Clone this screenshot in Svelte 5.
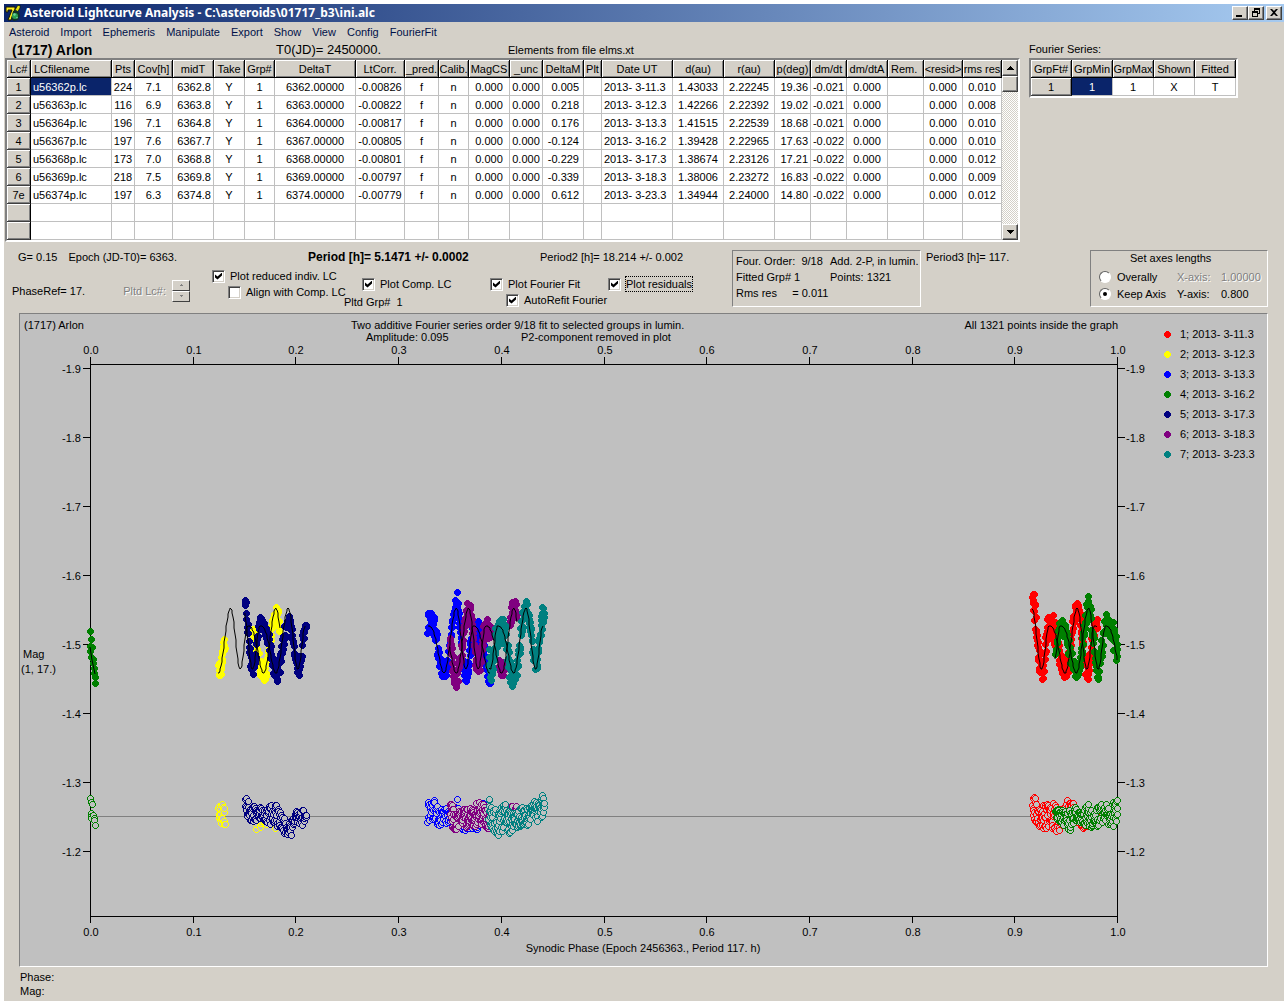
<script>
  const menu = ['Asteroid', 'Import', 'Ephemeris', 'Manipulate', 'Export', 'Show', 'View', 'Config', 'FourierFit'];

  // label, width, alignment of the cells
  const columns = [
    ['Lc#', 24, 'center'], ['LCfilename', 81, 'left'], ['Pts', 23, 'center'], ['Cov[h]', 38, 'center'],
    ['midT', 41, 'right'], ['Take', 31, 'center'], ['Grp#', 30, 'center'], ['DeltaT', 81, 'center'],
    ['LtCorr.', 49, 'center'], ['_pred.', 34, 'center'], ['Calib.', 30, 'center'], ['MagCS', 41, 'center'],
    ['_unc', 33, 'center'], ['DeltaM', 41, 'right wide'], ['Plt', 18, 'center'], ['Date UT', 71, 'left'],
    ['d(au)', 51, 'center'], ['r(au)', 51, 'center'], ['p(deg)', 36, 'right'], ['dm/dt', 36, 'center'],
    ['dm/dtA', 41, 'center'], ['Rem.', 36, 'left'], ['<resid>', 39, 'center'], ['rms res', 39, 'center']
  ];
  const night = (no, file, pts, cov, mid, delta, lt, dm, date, d, r, p, dmdt, rms) =>
    [no, file, pts, cov, mid, 'Y', '1', delta, lt, 'f', 'n', '0.000', '0.000', dm, '', date, d, r, p, dmdt, '0.000', '', '0.000', rms];
  const rows = [
    night('1', 'u56362p.lc', '224', '7.1', '6362.8', '6362.00000', '-0.00826', '0.005', '2013- 3-11.3', '1.43033', '2.22245', '19.36', '-0.021', '0.010'),
    night('2', 'u56363p.lc', '116', '6.9', '6363.8', '6363.00000', '-0.00822', '0.218', '2013- 3-12.3', '1.42266', '2.22392', '19.02', '-0.021', '0.008'),
    night('3', 'u56364p.lc', '196', '7.1', '6364.8', '6364.00000', '-0.00817', '0.176', '2013- 3-13.3', '1.41515', '2.22539', '18.68', '-0.021', '0.010'),
    night('4', 'u56367p.lc', '197', '7.6', '6367.7', '6367.00000', '-0.00805', '-0.124', '2013- 3-16.2', '1.39428', '2.22965', '17.63', '-0.022', '0.010'),
    night('5', 'u56368p.lc', '173', '7.0', '6368.8', '6368.00000', '-0.00801', '-0.229', '2013- 3-17.3', '1.38674', '2.23126', '17.21', '-0.022', '0.012'),
    night('6', 'u56369p.lc', '218', '7.5', '6369.8', '6369.00000', '-0.00797', '-0.339', '2013- 3-18.3', '1.38006', '2.23272', '16.83', '-0.022', '0.009'),
    night('7e', 'u56374p.lc', '197', '6.3', '6374.8', '6374.00000', '-0.00779', '0.612', '2013- 3-23.3', '1.34944', '2.24000', '14.80', '-0.022', '0.012'),
    Array(24).fill(''),
    Array(24).fill('')
  ];

  // Light curve: one rotation is 136 sub-units (three per pixel) long.
  const ease = (a, b, t) => a + ((b - a) * (1 - Math.cos(Math.PI * t))) / 2;
  function curve(u) {
    const t = ((u % 136) + 136) % 136;
    if (t < 37) return ease(280, 85, t / 37);
    if (t < 66) return ease(85, 268, (t - 37) / 29);
    if (t < 88) return ease(268, 138, (t - 66) / 22);
    return ease(138, 280, Math.pow((t - 88) / 48, 1.4));
  }

  // band: [position, lowest residual, highest residual]
  const nights = [
    { color: '#ff0000', label: '1; 2013- 3-11.3', n: 224, x0: 1010, min: 165, line: [67, 262], spans: [[67, 262]],
      band: [[67, -45, -10], [72, -63, 30], [85, -20, 35], [100, -35, 40], [127, -52, 40], [143, -20, 50], [160, -25, 20], [172, -52, 20], [188, -40, 10], [200, -20, 20], [215, -10, 35], [230, -10, 40], [255, -20, 20], [262, -40, 10]] },
    { color: '#ffff00', label: '2; 2013- 3-12.3', n: 116, x0: 200, min: 191, line: [55, 240], spans: [[55, 74], [158, 170], [178, 238]],
      band: [[55, -38, 10], [62, -38, 20], [74, -28, 42], [160, -30, 20], [170, -25, 45], [190, -20, 25], [238, -14, 42]] },
    { color: '#0000ff', label: '3; 2013- 3-13.3', n: 196, x0: 410, min: 102, line: [53, 240], spans: [[52, 240]],
      band: [[52, -42, 25], [60, -48, 20], [73, -50, 20], [88, -25, 37], [100, -30, 25], [125, -20, 20], [139, -52, 5], [150, -40, 30], [163, 0, 50], [180, 0, 40], [197, -20, 52], [215, -45, 20], [240, -10, 30]] },
    { color: '#008000', label: '4; 2013- 3-16.2', n: 185, x0: 1010, min: 199, line: [136, 322], spans: [[136, 322]],
      band: [[136, -35, 0], [152, -15, 45], [165, -25, 20], [178, -20, 50], [190, -30, 15], [215, -15, 20], [232, -38, 30], [255, -25, 42], [275, -38, 20], [292, -38, 25], [315, -45, 33], [322, -50, 10]] },
    { color: '#000080', label: '5; 2013- 3-17.3', n: 173, x0: 200, min: 228, line: [134, 316], spans: [[134, 318]],
      band: [[134, -62, -20], [141, -58, 0], [150, -28, 15], [170, -38, 35], [181, -47, 20], [195, -20, 30], [220, -50, 20], [240, -15, 35], [255, 0, 60], [267, 15, 78], [280, 0, 35], [292, -22, 40], [308, -20, 28], [318, -5, 5]] },
    { color: '#800080', label: '6; 2013- 3-18.3', n: 218, x0: 410, min: 139, line: [119, 322], spans: [[119, 240], [266, 282], [298, 320]],
      band: [[119, -30, 10], [124, -55, 30], [130, -20, 58], [150, -20, 25], [165, -25, 35], [185, -30, 30], [202, -43, 30], [220, -35, 20], [230, -30, 38], [245, -20, 30], [275, -27, 10], [320, -30, 8]] },
    { color: '#008080', label: '7; 2013- 3-23.3', n: 197, x0: 410, min: 311, line: [238, 400], spans: [[235, 402]],
      band: [[235, -58, 20], [245, -30, 40], [260, -20, 60], [283, -40, 45], [295, -20, 58], [312, -5, 45], [325, -40, 30], [345, -25, 30], [357, -25, 50], [370, -48, 20], [385, -45, 20], [397, -72, 0], [402, -45, -15]] }
  ];

  function limits(band, u) {
    let i = 1;
    while (i < band.length - 1 && u > band[i][0]) i++;
    const [a, b] = [band[i - 1], band[i]];
    const t = Math.min(1, Math.max(0, (u - a[0]) / (b[0] - a[0])));
    return [a[1] + (b[1] - a[1]) * t, a[2] + (b[2] - a[2]) * t];
  }

  let seed = 1717;
  function random() {
    seed = (seed * 1103515245 + 12345) % 2147483648;
    return seed / 2147483648;
  }

  const series = nights.map((s) => {
    const total = s.spans.reduce((sum, [a, b]) => sum + b - a, 0);
    const points = [];
    for (const [a, b] of s.spans) {
      const count = Math.round((s.n * (b - a)) / total);
      for (let i = 0; i < count; i++) {
        const u = a + ((b - a) * i) / (count - 1);
        const [lo, hi] = limits(s.band, u);
        const residual = lo + (hi - lo) * random();
        points.push({
          x: Math.round(s.x0 + u / 3),
          y: Math.round(580 + (curve(u - s.min) + residual) / 3),
          r: Math.round(816 + residual / 3)
        });
      }
    }
    let line = '';
    for (let u = s.line[0]; u <= s.line[1]; u += 2) {
      line += `${Math.round(s.x0 + u / 3)},${Math.round(580 + curve(u - s.min) / 3)} `;
    }
    return { color: s.color, label: s.label, points, line };
  });

  // the fourth night wraps round to the start of the phase axis
  const wrapDots = [[90, 631], [91, 639], [90, 646], [92, 647], [90, 651], [91, 657], [93, 659], [93, 663], [94, 668], [94, 673], [95, 677], [95, 683]];
  const wrapRings = [[90, 798], [91, 802], [92, 804], [91, 813], [91, 816], [91, 818], [93, 815], [94, 818], [94, 820], [95, 825]];

  const xTicks = Array.from({ length: 11 }, (_, i) => ({ x: Math.round(90 + i * 102.7), text: (i / 10).toFixed(1) }));
  const yTicks = Array.from({ length: 8 }, (_, i) => ({ y: 368 + i * 69, text: (-1.9 + i / 10).toFixed(1) }));

  let axis = $state('keep');
</script>

<div class="window">
  <header class="titlebar">
    <svg class="logo" viewBox="0 0 17 17" width="17" height="17" aria-hidden="true">
      <path d="M1 2h9v2L6 15H3L7 5H3v2H1z" fill="#ffee20" stroke="#181800" stroke-width="1" />
      <path d="M10 5l3-5 1 1 1-1v3l-3 5z" fill="#e8e010" stroke="#102000" stroke-width=".7" />
      <path d="M8 6l3-1 3 2 1 4-2 4-4 1-3-2 1-4z" fill="#123028" />
      <circle cx="10" cy="11" r="3" fill="#2aa050" />
      <path d="M8 9l2-1 1 2-2 1zM11 12h2l-1 2z" fill="#70d0a0" />
    </svg>
    <h1>Asteroid Lightcurve Analysis - C:\asteroids\01717_b3\ini.alc</h1>
    <div class="winbuttons">
      <button aria-label="Minimize"><svg viewBox="0 0 12 10" width="12" height="10"><path d="M2 7h6v2H2z" /></svg></button>
      <button aria-label="Restore"><svg viewBox="0 0 12 10" width="12" height="10"><path d="M4 0h6v6H8V5h1V2H5v1H4zM2 3h6v6H2zM3 5v3h4V5z" fill-rule="evenodd" /></svg></button>
      <button aria-label="Close" class="close"><svg viewBox="0 0 12 10" width="12" height="10"><path d="M2 1h2l2 2 2-2h2L7 4.500 10 8H8L6 6 4 8H2l3-3.500z" /></svg></button>
    </div>
  </header>

  <nav class="menu">
    {#each menu as item}<button>{item}</button>{/each}
  </nav>

  <div class="top">
    <section>
      <div class="info">
        <strong>(1717) Arlon</strong>
        <span class="t0">T0(JD)= 2450000.</span>
        <span>Elements from file elms.xt</span>
      </div>
      <div class="gridbox">
        <table>
          <colgroup>{#each columns as c}<col style="width:{c[1]}px" />{/each}</colgroup>
          <thead>
            <tr>{#each columns as c}<th class={c[2] === 'left' && c[0] !== 'Date UT' ? 'left' : 'center'}>{c[0]}</th>{/each}</tr>
          </thead>
          <tbody>
            {#each rows as row, r}
              <tr>
                {#each row as cell, i}
                  {#if i === 0}
                    <th class="center">{cell}</th>
                  {:else}
                    <td class={[columns[i][2], r === 0 && i === 1 && 'selected']}>{cell}</td>
                  {/if}
                {/each}
              </tr>
            {/each}
          </tbody>
        </table>
        <div class="scroll">
          <button aria-label="Scroll up"><svg viewBox="0 0 7 4" width="7" height="4"><path d="M3 0h1v1h1v1h1v1h1v1H0V3h1V2h1V1h1z" /></svg></button>
          <div class="thumb"></div>
          <button class="down" aria-label="Scroll down"><svg viewBox="0 0 7 4" width="7" height="4"><path d="M0 0h7v1H6v1H5v1H4v1H3V3H2V2H1V1H0z" /></svg></button>
        </div>
      </div>
    </section>

    <section>
      <div class="info series">Fourier Series:</div>
      <div class="gridbox">
        <table class="fourier">
          <thead><tr><th>GrpFt#</th><th>GrpMin</th><th>GrpMax</th><th>Shown</th><th>Fitted</th></tr></thead>
          <tbody><tr><th>1</th><td class="selected">1</td><td>1</td><td>X</td><td>T</td></tr></tbody>
        </table>
      </div>
    </section>
  </div>

  <div class="controls">
    <div class="main">
      <div class="periods">
        <span class="epoch"><span>G= 0.15</span><span>Epoch (JD-T0)= 6363.</span></span>
        <strong>Period [h]= 5.1471 +/- 0.0002</strong>
        <span>Period2 [h]= 18.214 +/- 0.002</span>
      </div>
      <div class="options">
        <div class="phase">
          <span>PhaseRef= 17.</span>
          <span class="off">Pltd Lc#:</span>
          <span class="spin">
            <button disabled aria-label="Next"><svg viewBox="0 0 5 3" width="5" height="3"><path d="M2 0h1v1h1v1H1V1h1z" /></svg></button>
            <button disabled aria-label="Previous"><svg viewBox="0 0 5 3" width="5" height="3"><path d="M1 0h3v1H3v1H2V1H1z" /></svg></button>
          </span>
        </div>
        <div class="stack">
          <label><input type="checkbox" checked /><span>Plot reduced indiv. LC</span></label>
          <label class="sub"><input type="checkbox" /><span>Align with Comp. LC</span></label>
        </div>
        <div class="stack low">
          <label class="inset"><input type="checkbox" checked /><span>Plot Comp. LC</span></label>
          <span class="group">Pltd Grp#&nbsp; 1</span>
        </div>
        <div class="stack low">
          <label><input type="checkbox" checked /><span>Plot Fourier Fit</span></label>
          <label class="sub"><input type="checkbox" checked /><span>AutoRefit Fourier</span></label>
        </div>
        <div class="stack low">
          <label><input type="checkbox" checked /><span class="focus">Plot residuals</span></label>
        </div>
      </div>
    </div>
    <div class="box fit">
      <span>Four. Order:&nbsp; 9/18</span><span>Add. 2-P, in lumin.</span>
      <span>Fitted Grp# 1</span><span>Points: 1321</span>
      <span>Rms res &nbsp;&nbsp;&nbsp; = 0.011</span>
    </div>
    <div class="third">Period3 [h]= 117.</div>
    <fieldset class="box axes">
      <div class="legend">Set axes lengths</div>
      <label><input type="radio" name="axis" value="overall" bind:group={axis} /><span>Overally</span></label>
      <label class="off" for="xaxis">X-axis:</label><input id="xaxis" class="off" disabled value="1.00000" />
      <label><input type="radio" name="axis" value="keep" bind:group={axis} /><span>Keep Axis</span></label>
      <label for="yaxis">Y-axis:</label><input id="yaxis" value="0.800" />
    </fieldset>
  </div>

  <div class="chart">
    <svg viewBox="20 314 1247 652" role="img" aria-label="Light curve of (1717) Arlon">
      <defs>
        <path id="dot" d="M-1-3h3v1h1v1h1v3h-1v1h-1v1h-3v-1h-1v-1h-1v-3h1v-1h1z" fill="currentColor" />
        <g id="ring">
          <path d="M-1-3h3v1h1v1h1v3h-1v1h-1v1h-3v-1h-1v-1h-1v-3h1v-1h1z" fill="currentColor" />
          <path d="M-1-2h3v1h1v3h-1v1h-3v-1h-1v-3h1z" fill="#c0c0c0" />
        </g>
      </defs>
      <text x="24" y="329">(1717) Arlon</text>
      <text x="351" y="329">Two additive Fourier series order 9/18 fit to selected groups in lumin.</text>
      <text x="366" y="341">Amplitude: 0.095</text>
      <text x="521" y="341">P2-component removed in plot</text>
      <text x="1118" y="329" text-anchor="end">All 1321 points inside the graph</text>
      <text x="23" y="658">Mag</text>
      <text x="21" y="673">(1, 17.)</text>
      <text x="643" y="952" text-anchor="middle">Synodic Phase (Epoch 2456363., Period 117. h)</text>

      <g class="crisp">
        <path class="zero" d="M90 816.500H1117" />
        <path class="axis" d="M90.500 357V923M1117.500 357V923M90 364.500H1117M90 916.500H1117" />
        {#each xTicks as t}
          <path class="axis" d="M{t.x + 0.5} 357v7M{t.x + 0.5} 917v6" />
        {/each}
        {#each yTicks as t}
          <path class="axis" d="M83 {t.y + 0.5}h7M1118 {t.y + 0.5}h7" />
        {/each}
      </g>
      {#each xTicks as t}
        <text x={t.x + 1} y="354" text-anchor="middle">{t.text}</text>
        <text x={t.x + 1} y="936" text-anchor="middle">{t.text}</text>
      {/each}
      {#each yTicks as t}
        <text x="81" y={t.y + 5} text-anchor="end">{t.text}</text>
        <text x="1126" y={t.y + 5}>{t.text}</text>
      {/each}

      <g class="crisp">
        {#each series as s, i}
          <g color={s.color}>
            {#each s.points as p}<use href="#dot" x={p.x} y={p.y} />{/each}
            {#if i === 3}
              {#each wrapDots as [x, y]}<use href="#dot" {x} {y} />{/each}
            {/if}
          </g>
        {/each}
        {#each series as s, i}
          <g color={s.color}>
            {#each s.points as p}<use href="#ring" x={p.x} y={p.r} />{/each}
            {#if i === 3}
              {#each wrapRings as [x, y]}<use href="#ring" {x} {y} />{/each}
            {/if}
          </g>
        {/each}
      </g>
      {#each series as s}<polyline points={s.line} />{/each}
      <polyline points="90,647 92,660 95,674" />

      {#each series as s, i}
        <use href="#dot" x="1167" y={334 + i * 20} color={s.color} />
        <text x="1180" y={338 + i * 20}>{s.label}</text>
      {/each}
    </svg>
  </div>

  <footer>
    <div>Phase:</div>
    <div>Mag:</div>
  </footer>
</div>

<style>
  :global(body) { margin: 0; background: #fff; }
  .window, button, input { font-family: 'Liberation Sans', Arial, sans-serif; font-size: 11px; color: #000; }
  .window { margin: 4px 4px 0; background: #d4d0c8; line-height: 14px; white-space: nowrap; box-sizing: border-box; }
  button { padding: 0; border: 0; background: #d4d0c8; }

  .titlebar { display: flex; align-items: center; height: 18px; background: linear-gradient(90deg, #0a246a, #a6caf0); }
  .logo { margin-left: 1px; }
  h1 { flex: 1; margin: 0 0 0 2px; font: bold 12px/18px 'Noto Sans', Tahoma, sans-serif; color: #fff; }
  .winbuttons { display: flex; margin-right: 2px; }
  .winbuttons button { display: flex; align-items: center; justify-content: center; width: 16px; height: 14px; border: 1px solid; border-color: #fff #404040 #404040 #fff; box-shadow: inset -1px -1px #808080; box-sizing: border-box; }
  .winbuttons .close { margin-left: 2px; }

  .menu { display: flex; gap: 11px; height: 20px; padding-left: 5px; }
  .menu button { line-height: 20px; color: #001048; }

  .top { display: flex; gap: 9px; padding-left: 1px; }
  .info { display: grid; grid-template-columns: 264px 232px 1fr; align-items: center; height: 16px; padding-left: 7px; }
  .info strong { font-size: 14px; }
  .info .t0 { font-size: 13px; }
  .info.series { display: block; padding-left: 0; }
  .gridbox { display: flex; border: 2px solid; border-color: #808080 #fff #fff #808080; width: max-content; background: #fff; }
  table { table-layout: fixed; border-collapse: separate; border-spacing: 0; width: 995px; }
  table.fourier { width: 205px; }
  th, td { box-sizing: border-box; height: 18px; padding: 0; line-height: 16px; font-weight: normal; overflow: hidden; text-align: center; }
  td { border-right: 1px solid #c0c0c0; border-bottom: 1px solid #c0c0c0; }
  th { background: #d4d0c8; border-right: 1px solid #000; border-bottom: 1px solid #000; box-shadow: inset 1px 1px #fff, inset -1px -1px #808080; }
  tbody th { border-bottom-color: #404040; }
  td.left { text-align: left; padding-left: 2px; }
  th.left { text-align: left; padding-left: 3px; }
  td.right { text-align: right; padding-right: 2px; }
  td.wide { padding-right: 4px; }
  td.selected { background: #0a246a; color: #fff; }
  .scroll { display: flex; flex-direction: column; width: 16px; background: repeating-conic-gradient(#fff 0 25%, #d4d0c8 0 50%) 0 0 / 2px 2px; }
  .scroll button, .thumb { display: flex; align-items: center; justify-content: center; width: 16px; height: 16px; box-sizing: border-box; background: #d4d0c8; border: 1px solid; border-color: #fff #404040 #404040 #fff; box-shadow: inset -1px -1px #808080; }
  .scroll .down { margin-top: auto; }

  .controls { display: flex; align-items: flex-start; padding: 8px 16px 1px 0; }
  .main { width: 728px; }
  .periods { display: grid; grid-template-columns: 290px 232px 1fr; padding-left: 14px; }
  .epoch { display: flex; gap: 11px; }
  .periods strong { font-size: 12px; }
  .options { display: flex; align-items: flex-start; }
  .phase { display: flex; align-items: center; width: 200px; height: 22px; margin: 16px 0 0 8px; }
  .phase .off { margin-left: auto; }
  .off { color: #808080; text-shadow: 1px 1px #fff; }
  .spin { display: flex; flex-direction: column; margin: 0 22px 0 6px; }
  .spin button { display: flex; align-items: center; justify-content: center; width: 18px; height: 11px; box-sizing: border-box; border: 1px solid; border-color: #fff #404040 #404040 #fff; }
  .spin path { fill: #808080; }
  .stack { display: flex; flex-direction: column; width: 132px; padding-top: 4px; }
  .stack + .stack { width: 146px; }
  .stack + .stack + .stack { width: 118px; }
  .stack.low { padding-top: 12px; }
  label { display: flex; align-items: center; height: 16px; }
  .stack label { gap: 5px; }
  .sub { padding-left: 16px; }
  .inset { padding-left: 18px; }
  .group { line-height: 20px; }
  .focus { outline: 1px dotted #000; }
  input { flex: none; margin: 0; padding: 0; border: 0; background: none; }
  input[type='checkbox'] { appearance: none; width: 13px; height: 13px; background: #fff; border: 1px solid; border-color: #808080 #fff #fff #808080; box-shadow: inset 1px 1px #404040, inset -1px -1px #d4d0c8; display: grid; place-items: center; box-sizing: border-box; }
  input[type='checkbox']:checked::before { content: ''; width: 7px; height: 7px; background: #000; clip-path: polygon(0 29%, 36% 58%, 100% 0, 100% 43%, 36% 100%, 0 72%); }
  .box { border: 1px solid; border-color: #808080 #fff #fff #808080; box-sizing: border-box; height: 57px; margin: 0; padding: 0; }
  .fit { display: grid; grid-template-columns: 94px 1fr; grid-auto-rows: 16px; width: 189px; padding: 2px 0 0 3px; line-height: 16px; }
  .third { margin-left: 5px; }
  .axes { display: grid; grid-template-columns: 78px 44px 44px; grid-auto-rows: 17px; width: 178px; margin-left: auto; padding-left: 8px; align-items: center; }
  .axes .legend { grid-column: 1 / -1; padding-left: 31px; line-height: 14px; align-self: start; }
  .axes label { gap: 6px; }
  .axes input:not([type]) { width: 44px; }
  input[type='radio'] { appearance: none; width: 12px; height: 12px; border-radius: 50%; background: #fff; border: 1px solid; border-color: #606060 #fff #fff #606060; display: grid; place-items: center; box-sizing: border-box; }
  input[type='radio']:checked::before { content: ''; width: 4px; height: 4px; border-radius: 50%; background: #000; }

  .chart { margin: 0 16px 0 15px; background: #c0c0c0; border: 1px solid; border-color: #808080 #fff #fff #808080; }
  .chart svg { display: block; width: 100%; height: auto; }
  .crisp { shape-rendering: crispEdges; }
  .axis { stroke: #000; fill: none; }
  .zero { stroke: #808080; }
  polyline { fill: none; stroke: #000; stroke-width: 1; }
  footer { padding: 3px 16px; border-bottom: 1px solid #fff; box-shadow: 0 2px #d4d0c8; }
</style>
